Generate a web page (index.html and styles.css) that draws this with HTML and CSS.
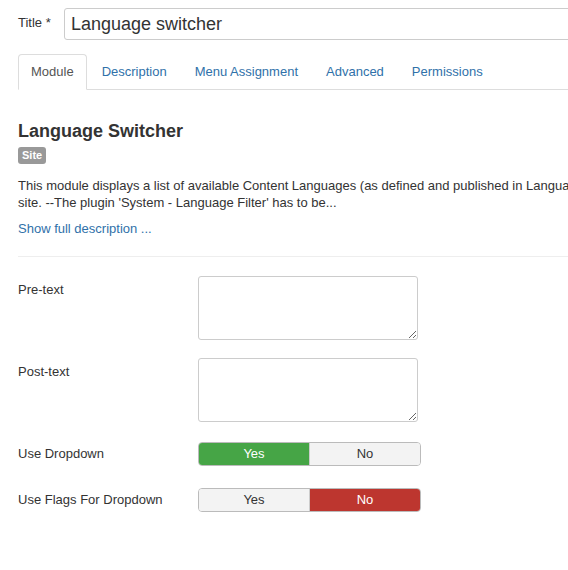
FILE: index.html
```html
<!DOCTYPE html>
<html>
<head>
<meta charset="utf-8">
<link rel="stylesheet" href="styles.css">
</head>
<body>
<div class="page">
  <div class="title-row">
    <label class="title-label">Title *</label>
    <input class="title-input" type="text" value="Language switcher">
  </div>
  <ul class="tabs">
    <li class="tab active">Module</li>
    <li class="tab">Description</li>
    <li class="tab">Menu Assignment</li>
    <li class="tab">Advanced</li>
    <li class="tab">Permissions</li>
  </ul>
  <div class="content">
    <h3 class="heading">Language Switcher</h3>
    <span class="badge">Site</span>
    <p class="desc">This module displays a list of available Content Languages (as defined and published in Language Manager Content tab) between which you can switch when you want to use your<br>site. --The plugin 'System - Language Filter' has to be...</p>
    <a class="more">Show full description ...</a>
    <hr class="sep">
    <div class="group">
      <div class="label">Pre-text</div>
      <textarea class="area"></textarea>
    </div>
    <div class="group">
      <div class="label">Post-text</div>
      <textarea class="area"></textarea>
    </div>
    <div class="group group-btn">
      <div class="label label-btn">Use Dropdown</div>
      <div class="toggle">
        <span class="opt yes-on">Yes</span>
        <span class="opt">No</span>
      </div>
    </div>
    <div class="group group-btn">
      <div class="label label-btn">Use Flags For Dropdown</div>
      <div class="toggle">
        <span class="opt">Yes</span>
        <span class="opt no-on">No</span>
      </div>
    </div>
  </div>
</div>
</body>
</html>
```
FILE: styles.css
```css
html, body {
  margin: 0;
  padding: 0;
  background: #fff;
  overflow: hidden;
}
body {
  font-family: "Liberation Sans", Arial, sans-serif;
  font-size: 13px;
  line-height: 18px;
  color: #333;
}
.page {
  padding: 8px 0 0 18px;
  width: 900px;
}
.title-row {
  display: flex;
  align-items: flex-start;
}
.title-label {
  padding-top: 6px;
  width: 46px;
  flex: none;
}
.title-input {
  box-sizing: border-box;
  width: 700px;
  height: 32px;
  margin: 0;
  padding: 4px 6px;
  border: 1px solid #ccc;
  border-radius: 3px;
  font-family: "Liberation Sans", Arial, sans-serif;
  font-size: 18px;
  color: #333;
  outline: none;
}
.tabs {
  list-style: none;
  margin: 14px 0 0 0;
  padding: 0;
  display: flex;
  border-bottom: 1px solid #ddd;
}
.tab {
  padding: 8px 12px;
  margin-right: 2px;
  margin-bottom: -1px;
  border: 1px solid transparent;
  border-radius: 4px 4px 0 0;
  color: #3071a9;
}
.tab.active {
  color: #555;
  border-color: #ddd #ddd transparent;
  background: #fff;
}
.content {
  padding-top: 30px;
  width: 550px;
}
.heading {
  margin: 0;
  font-size: 18px;
  line-height: 22px;
  font-weight: bold;
  color: #333;
}
.badge {
  display: inline-block;
  vertical-align: top;
  margin-top: 5px;
  padding: 0 4px;
  font-size: 11px;
  line-height: 17px;
  font-weight: bold;
  color: #fff;
  background: #999;
  border-radius: 3px;
}
.desc {
  margin: 13px 0 0 0;
  line-height: 17px;
  width: 1000px;
  white-space: nowrap;
}
.more {
  display: block;
  margin-top: 9px;
  color: #3071a9;
}
.sep {
  margin: 18px 0 19px 0;
  border: 0;
  border-top: 1px solid #eee;
}
.group {
  display: flex;
  align-items: flex-start;
  margin-bottom: 18px;
}
.group-btn {
  padding: 2px 0;
}
.label {
  width: 180px;
  flex: none;
  padding-top: 5px;
}
.label-btn {
  padding-top: 3px;
}
.area {
  box-sizing: border-box;
  width: 220px;
  height: 64px;
  margin: 0;
  border: 1px solid #ccc;
  border-radius: 3px;
  resize: vertical;
  font-family: inherit;
}
.toggle {
  display: flex;
  width: 223px;
  height: 24px;
  box-sizing: border-box;
  border: 1px solid #bbb;
  border-radius: 4px;
  overflow: hidden;
}
.opt {
  flex: 1;
  text-align: center;
  line-height: 22px;
  background: #f3f3f3;
  color: #333;
}
.opt + .opt {
  border-left: 1px solid #ccc;
}
.opt.yes-on {
  background: #46a546;
  color: #fff;
}
.opt.no-on {
  background: #bd362f;
  color: #fff;
}
```
